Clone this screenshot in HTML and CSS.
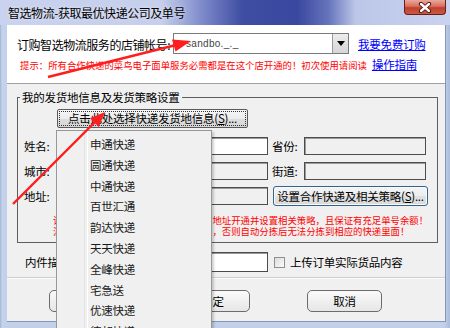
FILE: index.html
```html
<!DOCTYPE html>
<html lang="zh-CN">
<head>
<meta charset="utf-8">
<title>智选物流</title>
<link rel="stylesheet" href="styles.css">
</head>
<body>
<div class="window">
  <div class="titlebar">
    <span class="title">智选物流-获取最优快递公司及单号</span>
    <div class="close">
      <svg width="16" height="11" viewBox="0 0 16 11"><path d="M4 2 L12 9 M12 2 L4 9" stroke="#4a0d06" stroke-width="4.2" stroke-linecap="round"/><path d="M4 2 L12 9 M12 2 L4 9" stroke="#ffffff" stroke-width="2.4" stroke-linecap="round"/></svg>
    </div>
  </div>
  <div class="client">
    <div class="top-panel">
      <div class="shop-row">
        <span class="shop-label">订购智选物流服务的店铺帐号:</span>
        <div class="combo">
          <span class="combo-text">sandbo._._</span>
          <span class="combo-btn"><svg width="8" height="5" viewBox="0 0 8 5"><path d="M0 0 H8 L4 5 Z" fill="#000"/></svg></span>
        </div>
        <a class="link" href="#">我要免费订购</a>
      </div>
      <div class="hint-row">
        <span class="hint">提示：所有合作快递的菜鸟电子面单服务必需都是在这个店开通的！初次使用请阅读</span>
        <a class="link guide" href="#">操作指南</a>
      </div>
    </div>
    <div class="main">
      <fieldset class="group">
        <legend>我的发货地信息及发货策略设置</legend>
        <div class="group-body">
          <button class="btn pick-btn"><span class="focus">点击此处选择快递发货地信息(<u>S</u>)...</span></button>
          <div class="form-grid">
            <span class="lbl">姓名:</span><span class="input white"></span><span class="lbl r">省份:</span><span class="input"></span>
            <span class="lbl">城市:</span><span class="input"></span><span class="lbl r">街道:</span><span class="input"></span>
            <span class="lbl">地址:</span><span class="input"></span><button class="btn setup-btn">设置合作快递及相关策略(<u>S</u>)...</button>
          </div>
          <p class="warn">请确保以上选择的合作快递都已在发货地址开通并设置相关策略，且保证有充足单号余额！<br>注意：快递策略必须与店铺绑定的一致，否则自动分拣后无法分拣到相应的快递里面！</p>
        </div>
      </fieldset>
      <div class="desc-row">
        <span class="desc-label">内件描述</span>
        <span class="input white desc-input"></span>
        <span class="check"></span>
        <span class="check-text">上传订单实际货品内容</span>
      </div>
    </div>
    <div class="footer">
      <button class="btn round b1">保存</button>
      <button class="btn round b2">确定</button>
      <button class="btn round b3">取消</button>
    </div>
  </div>

  <div class="menu">
    <div class="item">申通快递</div>
    <div class="item">圆通快递</div>
    <div class="item">中通快递</div>
    <div class="item">百世汇通</div>
    <div class="item">韵达快递</div>
    <div class="item">天天快递</div>
    <div class="item">全峰快递</div>
    <div class="item">宅急送</div>
    <div class="item">优速快递</div>
    <div class="item">德邦快递</div>
  </div>

  <svg class="arrows" width="450" height="328" viewBox="0 0 450 328">
    <line x1="48" y1="77" x2="176" y2="45" stroke="#ff1e1e" stroke-width="2.4"/>
    <polygon points="191,41 175.5,51.5 172,39.5" fill="#ff1e1e"/>
    <line x1="13" y1="204" x2="96" y2="121" stroke="#ff1e1e" stroke-width="2.4"/>
    <polygon points="105,112 98.8,127 90,118.2" fill="#ff1e1e"/>
  </svg>
</div>
</body>
</html>
```

FILE: styles.css
```css
* { box-sizing: border-box; }

html, body {
  margin: 0;
  padding: 0;
}

body {
  width: 450px;
  height: 328px;
  overflow: hidden;
  font-family: "Noto Sans CJK SC", "Liberation Sans", sans-serif;
  font-size: 11.5px;
  letter-spacing: -0.25px;
  color: #000;
  background: #c3d0e9;
}

.window {
  position: relative;
  width: 450px;
  height: 328px;
  overflow: hidden;
  display: flex;
  flex-direction: column;
  background: linear-gradient(to right, #9fb2d8 0, #c6d3ec 2px, #c3d0e9 6px, #c3d0e9 444px, #a9bbdc 450px);
}

/* title bar */
.titlebar {
  height: 25px;
  flex: none;
  display: flex;
  justify-content: space-between;
  align-items: flex-start;
  background: linear-gradient(to right, #c9d2ee 0%, #c5ceeb 36%, #7683c6 46%, #3e4ca2 54%, #39479e 66%, #6674bd 73%, #bcc6e8 79%, #c9d2ee 100%);
}

.title {
  padding-left: 8px;
  line-height: 26px;
  font-size: 12px;
  letter-spacing: -0.45px;
  color: #000;
  text-shadow: 0 0 4px rgba(255,255,255,0.7);
}

.close {
  width: 42px;
  height: 15px;
  margin-right: 4px;
  display: flex;
  align-items: center;
  justify-content: center;
  border: 1px solid #6b1d14;
  border-top: none;
  border-radius: 0 0 4px 4px;
  background: linear-gradient(#e9a89a 0%, #d86f5e 45%, #c23f2c 55%, #c95a45 100%);
}

/* client area */
.client {
  flex: 1;
  margin: 0 4px 6px 7px;
  display: flex;
  flex-direction: column;
  background: #f0f0f0;
  border-right: 1px solid #8596b8;
  border-bottom: 1px solid #8596b8;
}

.top-panel {
  height: 59px;
  flex: none;
  background: #fff;
  border-bottom: 1px solid #a0a0a0;
}

.shop-row {
  display: flex;
  align-items: center;
  height: 21px;
  margin-top: 8px;
  padding-left: 10px;
}

.shop-label {
  width: 156px;
  flex: none;
  font-size: 12px;
  letter-spacing: -0.45px;
  position: relative;
  top: 1px;
}

.combo {
  width: 176px;
  height: 21px;
  flex: none;
  display: flex;
  border: 1px solid #7a7a7a;
  background: #fff;
}

.combo-text {
  flex: 1;
  padding-left: 12px;
  font-family: "Liberation Sans", sans-serif;
  font-size: 10px;
  letter-spacing: 0.3px;
  line-height: 19px;
  color: #444;
}

.combo-btn {
  width: 16px;
  display: flex;
  align-items: center;
  justify-content: center;
  background: linear-gradient(#ececec, #d6d6d6);
  border-left: 1px solid #9a9a9a;
}

.link {
  color: #0000ff;
  text-decoration: underline;
  margin-left: 9px;
}

.hint-row {
  display: flex;
  align-items: center;
  height: 14px;
  margin-top: 3px;
  padding-left: 13px;
}

.hint {
  color: #ff0000;
  font-size: 9.4px;
  letter-spacing: 0;
  line-height: 14px;
  position: relative;
  top: 1px;
}

.guide {
  margin-left: 5px;
}

/* main group */
.main {
  flex: none;
}

.group {
  margin: 6px 7px 0 10px;
  padding: 0 0 5px 0;
  border: 1px solid #5e5e5e;
  min-width: 0;
}

.group legend {
  margin-left: 2px;
  padding: 0 2px;
  line-height: 14px;
  font-size: 11.5px;
}

.group-body {
  padding-top: 5px;
}

.btn {
  font-family: inherit;
  font-size: 11.5px;
  letter-spacing: -0.25px;
  color: #000;
  padding: 0;
  margin: 0;
}

.pick-btn {
  display: block;
  margin-left: 39px;
  width: 191px;
  height: 19px;
  border: 1px solid #5a5a5a;
  border-radius: 2px;
  background: linear-gradient(#f7f7f7 0%, #ececec 50%, #dedede 51%, #d6d6d6 100%);
  padding: 2px;
}

.pick-btn .focus {
  display: flex;
  align-items: center;
  justify-content: center;
  height: 100%;
  outline: 1px dotted #333;
  line-height: 13px;
}

.form-grid {
  display: grid;
  grid-template-columns: 33px 211px 36px 122px;
  grid-auto-rows: 18px;
  row-gap: 7px;
  margin: 9px 0 0 6px;
}

.lbl {
  display: flex;
  align-items: center;
  line-height: 18px;
}

.lbl.r {
  padding-left: 4px;
}

.input {
  display: block;
  height: 18px;
  border: 1px solid #4c4c4c;
  box-shadow: inset 1px 1px 0 #9a9a9a;
  background: #f0f0f0;
}

.input.white {
  background: #fff;
}

.setup-btn {
  grid-column: 3 / 5;
  margin: -1px 0 0 5px;
  width: 155px;
  height: 20px;
  border: 1px solid #2f6590;
  border-radius: 3px;
  background: linear-gradient(#f4f4f4 0%, #ececec 50%, #e1e1e1 51%, #d9d9d9 100%);
  box-shadow: inset 0 0 0 1px #fafafa;
}

.warn {
  margin: 10px 0 0 35px;
  color: #ff0000;
  font-size: 9.4px;
  letter-spacing: 0;
  line-height: 11px;
  white-space: nowrap;
}

/* description row */
.desc-row {
  display: flex;
  align-items: center;
  height: 20px;
  margin-top: 9px;
  padding-left: 18px;
}

.desc-label {
  width: 55px;
  flex: none;
}

.desc-input {
  width: 188px;
  height: 20px;
  flex: none;
}

.check {
  width: 11px;
  height: 11px;
  margin-left: 6px;
  flex: none;
  border: 1px solid #8e8f8f;
  background: linear-gradient(135deg, #dcdcdc, #fbfbfb);
}

.check-text {
  margin-left: 5px;
}

/* footer */
.footer {
  margin-top: 5px;
  border-top: 1px solid #cfcfcf;
  box-shadow: inset 0 1px 0 #fbfbfb;
  padding-top: 12px;
  display: flex;
}

.round {
  width: 75px;
  height: 22px;
  border: 1px solid #6c6c6c;
  border-radius: 5px;
  background: linear-gradient(#fafafa 0%, #f0f0f0 50%, #e6e6e6 100%);
}

.b1 { margin-left: 42px; }
.b2 { margin-left: 51px; }
.b3 { margin-left: 57px; }

/* popup menu (runs off the bottom of the window, as in the capture) */
.menu {
  position: absolute;
  left: 56px;
  top: 130px;
  width: 156px;
  height: 198px;
  overflow: hidden;
  padding-top: 3px;
  border: 1px solid #979797;
  border-bottom: none;
  background: #f0f0f0;
  box-shadow: 2px 2px 2px rgba(0,0,0,0.18);
}

.menu::before {
  content: "";
  position: absolute;
  left: 27px;
  top: 0;
  bottom: 0;
  width: 2px;
  border-left: 1px solid #e2e3e3;
  border-right: 1px solid #ffffff;
}

.item {
  height: 20.8px;
  line-height: 20.8px;
  padding-left: 33px;
  color: #1a1a1a;
}

/* annotation arrows */
.arrows {
  position: absolute;
  left: 0;
  top: 0;
  pointer-events: none;
}
```
